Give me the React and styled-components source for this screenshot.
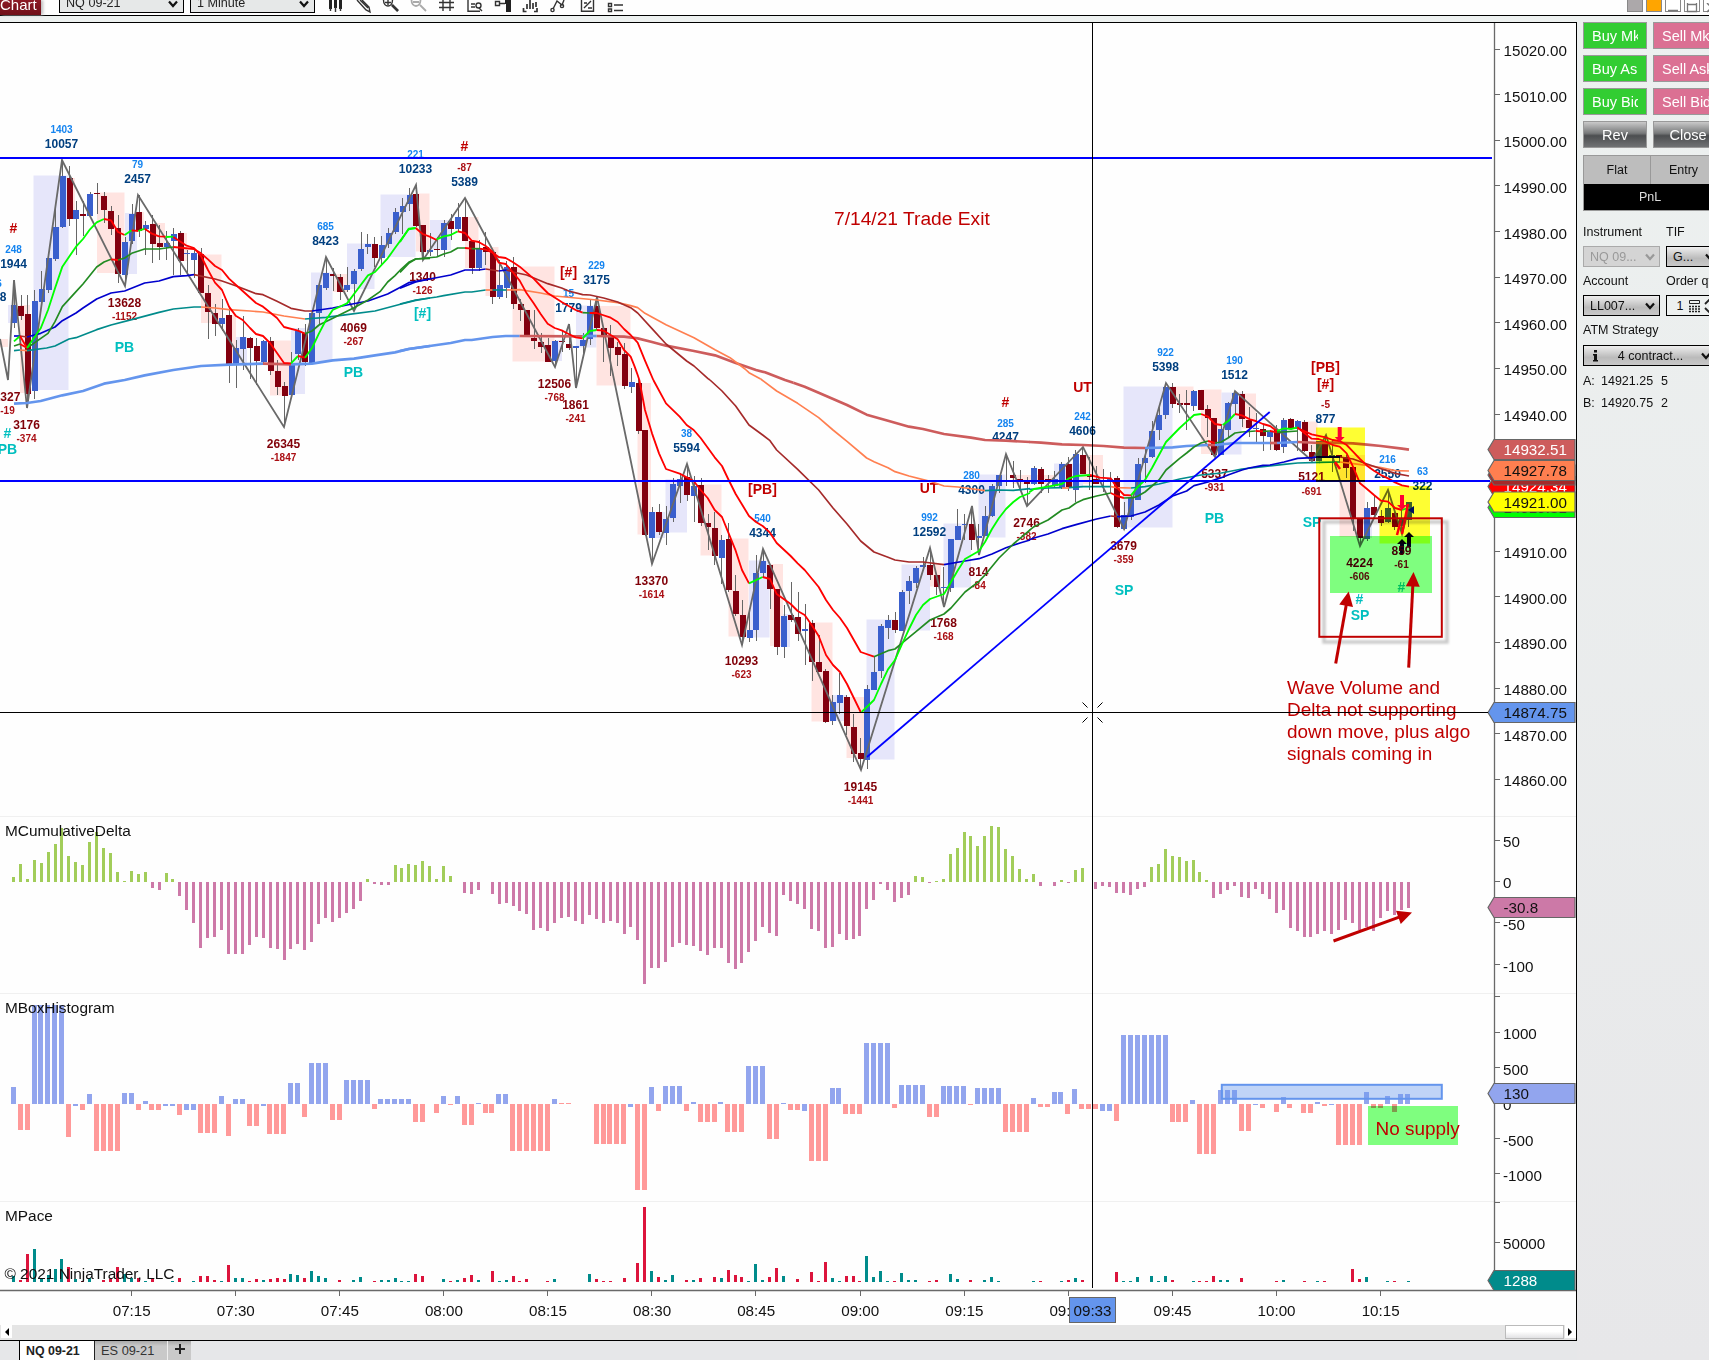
import styled, { createGlobalStyle } from "styled-components";

const GlobalStyle = createGlobalStyle`
  html, body {
    margin: 0;
    padding: 0;
    overflow: hidden;
    background: #e7e7e9;
    font-family: "Liberation Sans", Arial, sans-serif;
  }
  * {
    box-sizing: border-box;
  }
`;

//========================================================
// palette
const UP = "#3a5fcd";
const DOWN = "#83000f";
const BLUE = "#0000cd";
const BROWN = "#a52a2a";
const TEAL = "#008b8b";
const CORAL = "#ff7f50";
const RED = "#ff0000";
const LIME = "#00ff00";
const GREEN = "#228b22";
const CORN = "#6495ed";
const INDIAN = "#cd5c5c";
const NOTE = "#c00000";

// one minute bars, the first one at 06:58
const barX = (i) => 13.6 + i * 6.939;

//========================================================
// candles: direction, high, body top, body bottom, low
const CANDLES = `
u 280 305 323 328,d 295 306 316 320,d 295 314 394 408,u 290 301 391 399,u 271 289 302 306,
u 255 258 290 293,u 204 227 259 261,u 160 176 227 228,d 166 178 219 226,u 201 210 219 255,
d 201 214 216 236,u 192 194 216 218,d 183 193 194 214,d 192 196 210 223,d 206 211 229 235,
d 215 228 274 283,u 237 242 275 286,u 204 214 241 244,d 195 212 231 237,u 221 225 229 255,
d 215 224 244 263,d 225 243 247 260,u 231 243 247 260,u 228 234 241 275,d 231 233 261 275,
u 250 253 253 276,u 250 253 260 278,d 248 254 293 293,d 285 293 312 339,d 304 313 324 336,
u 299 318 324 331,d 307 315 364 383,u 340 348 364 388,u 316 337 349 370,d 337 338 348 379,
d 338 346 361 385,u 340 341 362 364,d 337 341 371 375,d 360 371 387 395,d 382 386 396 425,
u 352 365 395 397,u 328 331 354 360,d 324 333 362 366,u 311 313 363 364,u 282 285 313 324,
u 257 273 288 290,d 268 274 276 291,d 274 277 292 300,u 267 285 290 292,u 269 271 284 311,
u 232 249 269 271,u 234 244 247 254,d 237 244 258 267,u 236 245 258 264,u 228 233 244 248,
u 208 212 232 234,u 198 206 212 234,u 188 195 204 211,d 185 194 226 227,d 225 225 252 260,
u 233 250 252 256,d 237 249 250 256,u 220 223 250 257,d 214 221 229 240,u 203 217 229 231,
d 198 217 241 241,d 240 241 268 274,u 240 248 268 271,d 232 247 252 265,d 250 252 297 304,
u 260 285 297 299,u 261 267 288 298,d 257 267 304 309,d 299 304 310 321,d 310 310 335 337,
d 310 338 341 349,d 333 342 347 353,d 338 345 362 362,u 340 341 361 367,d 331 341 342 352,
d 324 344 348 350,u 346 346 348 388,u 333 340 346 353,u 300 306 339 345,d 297 306 328 330,
d 328 328 337 362,d 325 337 348 376,d 342 347 355 366,d 343 354 386 389,u 368 382 387 393,
d 377 383 431 434,d 430 430 535 536,u 507 512 538 564,d 504 512 532 535,u 506 519 533 545,
u 478 484 518 522,u 473 479 486 503,d 464 477 495 501,u 476 486 496 522,d 478 485 523 526,
d 514 523 527 550,d 512 528 556 565,u 535 540 558 584,d 523 539 590 592,d 575 591 614 616,
d 600 615 637 645,u 608 630 638 642,u 555 573 630 641,u 549 561 573 578,d 565 565 589 609,
d 589 589 647 655,u 605 616 647 658,d 582 615 620 622,d 592 617 634 641,u 604 629 631 665,
d 620 623 662 681,d 635 662 672 672,d 669 671 722 723,u 695 702 721 725,u 673 695 703 714,
d 695 697 726 735,d 714 727 754 762,d 738 753 759 770,u 685 689 760 769,u 656 672 690 690,
u 624 626 671 678,u 615 620 628 639,d 612 620 630 633,u 590 592 631 631,u 576 581 591 604,
u 566 568 583 588,u 557 565 567 570,d 549 565 575 580,d 575 575 587 595,u 567 587 588 606,
u 539 539 588 592,u 509 526 540 540,u 514 524 525 540,d 506 524 540 550,u 524 536 538 555,
u 506 516 536 536,u 484 486 516 517,u 475 475 486 493,u 454 480 482 486,d 461 475 478 488,
d 470 479 481 490,d 477 482 484 506,u 466 468 484 485,d 467 469 484 493,d 475 479 481 493,
u 471 479 486 487,u 462 464 488 489,d 457 464 487 491,u 450 454 490 502,d 447 455 474 474,
d 457 475 477 490,d 466 479 484 484,d 469 480 482 492,u 472 479 481 493,d 476 478 527 528,
u 502 515 529 530,u 494 498 517 520,u 458 464 500 500,u 449 458 463 483,u 421 431 457 458,
u 406 415 430 440,u 383 387 415 419,d 383 387 404 408,d 394 403 405 413,d 390 403 405 430,
u 390 391 406 411,d 390 390 410 410,d 405 409 418 437,d 418 418 455 456,u 424 429 455 455,
u 402 403 430 437,u 391 393 404 414,d 391 394 419 427,d 407 420 428 437,u 413 428 429 442,
d 425 429 436 451,u 430 432 437 450,d 425 430 450 451,u 418 420 447 453,d 418 419 428 428,
u 420 421 429 451,d 420 422 451 452,d 445 452 461 461,u 441 441 461 461,d 435 441 456 458,
u 440 455 457 472,d 455 455 457 463,d 455 457 468 478,d 467 467 518 531,d 518 518 538 546,
u 502 508 539 541,d 496 507 515 517,d 510 516 523 526,u 490 508 522 523,d 507 513 527 530,
u 507 518 526 534,u 502 502 520 527`
  .replace(/\n/g, "")
  .split(",")
  .map((row) => {
    const [dir, ...v] = row.trim().split(" ");
    return { dir, v: v.map(Number) };
  });

// shaded wave boxes: direction, x, y, width, height
const WAVES = [
  ["d", 0, 339, 8, 8], ["u", 8, 305, 7, 18], ["d", 20, 305, 10, 88], ["u", 33.5, 175.5, 35, 214.5],
  ["d", 69, 178, 6, 41], ["d", 97, 192.5, 27.5, 80.5], ["u", 125, 213, 12, 61], ["d", 137, 212, 7, 19],
  ["d", 152, 223, 13, 24], ["d", 180, 233, 7, 28], ["d", 201, 254.5, 20.5, 68.5], ["d", 229, 315, 7, 49],
  ["u", 236, 337, 11, 27], ["d", 270, 340.5, 21, 55], ["u", 291, 328, 14, 66], ["u", 311, 272.5, 21.5, 89],
  ["d", 333, 274, 14, 18], ["u", 347, 243.5, 27.5, 45.5], ["u", 380.5, 194.5, 35, 62.5], ["d", 416, 193.5, 13.5, 58],
  ["u", 430, 220, 21, 30], ["d", 465, 217, 13.5, 51], ["u", 479, 248, 8, 20], ["d", 485.5, 247, 13, 49],
  ["d", 512.5, 266.5, 42, 95], ["u", 555, 340, 7, 21], ["u", 576, 305.5, 20.5, 42], ["d", 596.5, 306, 34, 79.5],
  ["d", 637.5, 383, 13.5, 151.5], ["u", 651, 512, 14, 26], ["u", 665.5, 479, 21.5, 53.5], ["d", 700.5, 484.5, 21, 71],
  ["d", 728.5, 538.5, 20, 98], ["u", 749, 560.5, 20.5, 77], ["d", 770, 564, 13, 82], ["u", 783, 614, 7, 33],
  ["d", 811.5, 622.5, 21, 99], ["u", 833, 695, 14, 26], ["d", 846.5, 697, 20, 61], ["u", 866.5, 619.5, 28, 140],
  ["u", 901.5, 564.5, 28.5, 66], ["d", 930, 564.5, 11, 22], ["u", 943.5, 523.5, 27.5, 64], ["u", 978.5, 474.5, 27, 63],
  ["d", 1012, 475, 42, 9], ["u", 1054, 463.5, 29, 24], ["d", 1083, 455, 20, 29], ["u", 1123.5, 386.5, 49, 141],
  ["d", 1172.5, 386.5, 21, 17.5], ["d", 1201, 389.5, 20.5, 64.5], ["u", 1221.5, 392.5, 20, 62], ["d", 1242, 393.5, 14, 35],
  ["d", 1270, 429, 7, 21], ["d", 1301.5, 421.5, 16, 29], ["d", 1339.5, 455, 25.5, 82], ["u", 1365, 508, 7, 30],
];

const ZIGZAG =
  "0,339 8,380 14,280 27,408 62,160 125,286 138,195 284,427 326,257 354,311 416,185 423,260 465,198 555,367 569,324 576,388 597,297 652,564 687,464 742,645 763,549 861,770 930,548 944,607 972,506 979,555 1006,454 1027,506 1083,447 1124,529 1166,383 1215,457 1235,391 1312,461 1326,435 1360,546 1388,490 1402,534 1409,507";

//========================================================
// moving averages, traced in blocks; the points of a block are thirds of a pixel from its origin
const AVERAGES = [
  {
    x: 0,
    y: 120,
    thick: [
      [CORN, "42,851 81,849 122,843 187,826 249,813 312,791 374,780 434,766 520,750 603,738 687,734 789,731"],
      [INDIAN, "789,731 873,733"],
      [CORN, "873,733 936,731 998,721 1062,716 1125,706 1185,697 1226,687 1290,678"],
    ],
    thin: [
      [TEAL, "42,692 60,690"],
      [CORAL, "60,690 81,692"],
      [TEAL, "81,692 140,684 165,678 207,657 228,653 290,629 333,615 395,599 477,577 520,567 582,561 603,561"],
      [CORAL, "603,561 645,564 687,569 750,573 789,576 852,588 915,597"],
      [TEAL, "915,597 978,592 1041,584 1125,573 1204,552 1247,541 1290,534"],
      [BLUE, "42,648 60,648"],
      [BROWN, "60,648 81,651"],
      [BLUE, "81,651 122,640 165,621 187,602 228,579 249,564 290,537 333,519 374,513 434,489 477,483 520,470 560,467 582,464"],
      [BROWN, "582,464 645,477 666,483 707,497 768,521 789,524 831,544 873,565 915,573 936,573"],
      [BLUE, "936,573 998,564 1041,555 1104,543 1163,522 1204,500 1226,488 1290,477"],
      [GREEN, "42,678 60,672"],
      [RED, "60,672 81,684"],
      [GREEN, "81,684 144,640 165,605 187,560 228,515 249,492 290,441 312,426 333,418"],
      [RED, "333,418 354,420"],
      [GREEN, "354,420 374,414 395,400 434,387 477,387 520,381"],
      [RED, "520,381 582,387 603,400 624,418 645,438 666,450 687,476 728,513 768,549 789,560 831,594 852,621 894,632 915,641"],
      [GREEN, "915,641 936,633 957,615 1000,594 1062,563 1104,540 1140,515 1163,486 1185,467 1204,447 1226,427 1247,417 1290,415"],
      [LIME, "42,664 60,648"],
      [RED, "60,648 81,684"],
      [LIME, "81,684 122,625 144,570 165,505 187,440 228,380 249,357 270,328 290,307 312,297"],
      [RED, "312,297 333,301 345,321 354,336 374,345"],
      [LIME, "374,345 395,331"],
      [RED, "395,331 415,333"],
      [LIME, "415,333 434,326"],
      [RED, "434,326 456,341 477,349 497,350"],
      [LIME, "497,351 520,350"],
      [RED, "520,351 560,377 582,384 603,408 624,450 645,488 666,510 687,560 707,587 728,600 750,624 768,642 789,648 810,669 831,699 852,729 873,730"],
      [LIME, "873,730 894,708"],
      [RED, "894,708 915,713"],
      [LIME, "915,713 936,684 957,640 978,600 998,570 1041,550 1062,522 1104,466 1125,456 1163,415 1185,384 1226,328 1247,324"],
    ],
  },
  {
    x: 400,
    y: 120,
    thick: [
      [CORN, "0,693 26,687 110,675 152,669 195,660 215,660 278,651 317,648 359,648"],
      [INDIAN, "359,648 548,649"],
      [CORN, "548,648 590,648"],
      [INDIAN, "590,648 672,650 713,655 756,666 798,677 882,693 945,706 1005,728 1068,750 1095,757 1155,780 1180,788"],
    ],
    thin: [
      [TEAL, "0,552 47,540 110,531 131,527 195,516 215,516 257,510"],
      [CORAL, "257,510 278,510"],
      [TEAL, "278,510 320,510"],
      [CORAL, "320,510 359,509 422,519 464,528 527,534 590,540 653,548 692,557 713,563 735,580 798,614 882,653 945,689 990,713 1035,747 1047,758 1082,777"],
      [BLUE, "0,505 47,486 89,477 152,465 195,450 236,450 257,447"],
      [BROWN, "257,447 296,453"],
      [BLUE, "296,453 320,450"],
      [BROWN, "320,450 338,456 380,465 443,491 485,504 506,513 548,524 570,525 611,534 653,546 692,563 713,579 756,626 798,672 860,723 882,738 924,776 930,780"],
      [GREEN, "0,457 26,430 47,417 110,411 131,402 152,396 173,384 195,384"],
      [RED, "195,384 215,386"],
      [GREEN, "215,386 240,386"],
      [RED, "240,386 257,389 278,398 296,411 317,414 338,426 359,440 401,476 422,498 443,519 485,546 527,570 548,578"],
      [GREEN, "548,578 569,579"],
      [RED, "569,579 590,579 632,593 653,606 672,627 692,645 713,668 735,722 760,780"],
      [LIME, "0,366 26,326 47,324"],
      [RED, "47,324 68,342 89,350 110,360"],
      [LIME, "110,358 131,349 152,345 173,334"],
      [RED, "173,334 195,339 215,362 236,366 257,378 278,396 296,428 317,432 338,456 359,482 380,520 401,550 422,582 443,611 464,624 485,631 506,642 527,652 548,655"],
      [LIME, "548,655 569,633 590,630"],
      [RED, "590,630 611,632 632,645 653,658 672,690 692,710 704,740 713,765 718,780"],
    ],
  },
  {
    x: 600,
    y: 380,
    thick: [
      [INDIAN, "580,8 614,20 656,38 741,75 800,104 864,122 927,140 969,147 1032,162 1113,173 1155,180 1218,182 1290,186"],
    ],
    thin: [
      [CORAL, "482,-3 530,33 593,70 656,113 699,150 741,184 800,234 822,245 864,263 885,275 927,288 990,304 1032,318 1074,321 1155,332"],
      [TEAL, "1155,332 1197,330 1240,331 1290,326"],
      [BROWN, "330,0 366,33 407,78 447,135 488,165 510,182 530,210 593,268 656,330 699,384 741,432 782,483 822,516 864,532 885,540 927,546 969,546 1032,554"],
      [BLUE, "1032,554 1095,543 1137,536 1176,522 1218,503 1260,489 1290,480"],
      [RED, "160,0 198,70 239,110 260,135 281,150 302,174 344,232 366,258 386,300 407,342 447,408 468,426 488,438 510,458 530,489 572,528 593,550 614,570 656,621 678,660 699,690 720,714 741,744 782,816 822,830"],
      [GREEN, "822,830 864,812 885,807 905,790 948,755 990,720 1032,702 1053,684 1095,636 1137,604 1155,585 1197,534 1240,492 1290,450"],
      [RED, "118,0 135,90 156,160 177,220 198,267 239,281 281,303 302,330 323,354 344,390 366,411 386,460 407,512 426,570 447,610"],
      [LIME, "447,610 488,591"],
      [RED, "488,591 510,597 530,642 572,672 593,693 614,705 635,735 656,768 678,825 699,855 720,876 741,912 782,996"],
      [LIME, "785,996 822,960 843,912 864,868 885,840 905,795 927,747 948,705 969,675 990,657 1032,642 1053,606 1074,570 1095,537 1137,513 1155,486 1176,447 1197,414 1218,387 1240,366 1260,351 1290,339"],
    ],
  },
  {
    x: 1000,
    y: 340,
    thick: [
      [INDIAN, "88,306 123,308 186,313 249,315 311,318 372,323 435,324"],
      [CORN, "435,324 518,322 560,318 624,315"],
      [INDIAN, "624,315 645,315"],
      [CORN, "645,315 705,309 810,309"],
      [INDIAN, "810,309 831,309"],
      [CORN, "831,309 893,306"],
      [INDIAN, "893,306 960,309"],
    ],
    thin: [
      [TEAL, "88,448 102,447 144,444 186,443"],
      [CORAL, "186,444 207,444"],
      [TEAL, "207,443 249,440 332,440"],
      [CORAL, "332,440 351,443 393,444"],
      [TEAL, "393,444 435,440 477,432 539,417 603,405 664,399 726,387 789,380 852,373 893,369 960,367"],
      [BLUE, "88,599 102,594 144,582 186,566 228,554 290,537 332,528"],
      [BROWN, "332,528 351,530"],
      [BLUE, "351,530 393,528 435,516 477,495 518,468 560,453 582,437 624,426 664,413 684,405 726,390 747,384 789,376 810,375 852,366 893,355 936,353 960,350"],
      [GREEN, "88,571 102,560 144,540 186,510 207,504 228,489 249,479 290,468 332,459"],
      [RED, "332,459 351,468 372,474"],
      [GREEN, "372,474 400,473 414,468 435,456 456,438 477,420 498,390 539,355 560,339 582,321 603,309 624,303"],
      [RED, "624,303 645,309"],
      [GREEN, "645,309 664,306 684,294 705,279 726,276 767,273"],
      [RED, "767,273 789,274"],
      [GREEN, "789,274 810,273"],
      [RED, "810,273 831,277"],
      [GREEN, "831,277 893,273"],
      [LIME, "88,457 102,447 144,440 186,432 207,415 228,408 270,405"],
      [RED, "270,405 300,413 332,415 351,443 372,465 393,466"],
      [LIME, "393,466 414,440 435,420 456,384 477,345 498,306 539,264 560,245 582,225 603,222"],
      [RED, "603,222 624,230 645,252 664,255"],
      [LIME, "668,255 684,244 705,222"],
      [RED, "705,222 726,226 750,238 767,243 789,252 810,258 831,273"],
      [LIME, "831,273 852,265 873,267 893,262"],
    ],
  },
  {
    x: 1270,
    y: 340,
    thick: [[INDIAN, "148,309 188,308 249,310 291,314 333,318 396,326 417,329"]],
    thin: [
      [TEAL, "148,367 209,366"],
      [CORAL, "209,366 249,371 291,376 333,383 375,392 417,393"],
      [BLUE, "148,351 209,351"],
      [BROWN, "209,351 249,357 291,372 333,386 375,400 417,408"],
      [RED, "82,264 125,283 167,292 188,300 209,303 230,315 249,335 270,357 291,377 312,392 333,405 354,415 375,427 396,436 417,440"],
      [RED, "82,262 104,280 125,296 146,297 167,305 188,315 209,320 230,340 249,380 270,430 291,447 312,465 333,482 354,485 375,504 396,510"],
      [LIME, "396,510 417,503"],
    ],
  },
];

//========================================================
// chart labels: x, baseline, text, kind
const KINDS = {
  a: { size: 10, fill: "#1484f0" },
  v: { size: 12, fill: "#003f7f" },
  w: { size: 12, fill: "#800008" },
  d: { size: 10, fill: "#aa0f14" },
  r: { size: 14, fill: "#c00000" },
  c: { size: 14, fill: "#00bfbf" },
};
const LABELS = [
  [61.5, 133, "1403", "a"], [61.5, 148, "10057", "v"], [13.5, 233, "#", "r"], [13.5, 253, "248", "a"], [13.5, 268, "1944", "v"],
  [-6.5, 287, "156", "a"], [-7, 301, "2218", "v"], [7, 401, "1327", "w"], [7.5, 414, "-19", "d"], [26.5, 429, "3176", "w"],
  [26.5, 442, "-374", "d"], [7.5, 438, "#", "c"], [7.5, 454, "PB", "c"], [124.5, 307, "13628", "w"], [124.5, 320, "-1152", "d"],
  [124.5, 352, "PB", "c"], [137.5, 168, "79", "a"], [137.5, 183, "2457", "v"], [283.5, 448, "26345", "w"], [283.5, 461, "-1847", "d"],
  [325.5, 230, "685", "a"], [325.5, 245, "8423", "v"], [353.5, 332, "4069", "w"], [353.5, 345, "-267", "d"], [353.5, 377, "PB", "c"],
  [415.5, 158, "221", "a"], [415.5, 173, "10233", "v"], [422.5, 281, "1340", "w"], [422.5, 294, "-126", "d"], [422.5, 318, "[#]", "c"],
  [464.5, 151, "#", "r"], [464.5, 171, "-87", "d"], [464.5, 186, "5389", "v"], [568.5, 277, "[#]", "r"], [596.5, 269, "229", "a"],
  [596.5, 284, "3175", "v"], [568.5, 297, "15", "a"], [568.5, 312, "1779", "v"], [554.5, 388, "12506", "w"], [554.5, 401, "-768", "d"],
  [575.5, 409, "1861", "w"], [575.5, 422, "-241", "d"], [686.5, 437, "38", "a"], [686.5, 452, "5594", "v"], [651.5, 585, "13370", "w"],
  [651.5, 598, "-1614", "d"], [741.5, 665, "10293", "w"], [741.5, 678, "-623", "d"], [762.5, 494, "[PB]", "r"], [762.5, 522, "540", "a"],
  [762.5, 537, "4344", "v"], [860.5, 791, "19145", "w"], [860.5, 804, "-1441", "d"], [929, 493, "UT", "r"], [929.5, 521, "992", "a"],
  [929.5, 536, "12592", "v"], [971.5, 479, "280", "a"], [971.5, 494, "4300", "v"], [1005.5, 407, "#", "r"], [1005.5, 427, "285", "a"],
  [1005.5, 441, "4247", "v"], [943.5, 627, "1768", "w"], [943.5, 640, "-168", "d"], [978.5, 576, "814", "w"], [978.5, 589, "-84", "d"],
  [1026.5, 527, "2746", "w"], [1026.5, 540, "-382", "d"], [1082.5, 392, "UT", "r"], [1082.5, 420, "242", "a"], [1082.5, 435, "4606", "v"],
  [1123.5, 550, "3679", "w"], [1123.5, 563, "-359", "d"], [1124, 595, "SP", "c"], [1165.5, 356, "922", "a"], [1165.5, 371, "5398", "v"],
  [1234.5, 364, "190", "a"], [1234.5, 379, "1512", "v"], [1214.5, 478, "5337", "w"], [1214.5, 491, "-931", "d"], [1214.5, 523, "PB", "c"],
  [1311.5, 481, "5121", "w"], [1311.5, 495, "-691", "d"], [1312, 527, "SP", "c"], [1325.5, 372, "[PB]", "r"], [1325.5, 389, "[#]", "r"],
  [1325.5, 408, "-5", "d"], [1325.5, 423, "877", "v"], [1387.5, 463, "216", "a"], [1387.5, 478, "2550", "v"], [1422.5, 475, "63", "a"],
  [1422.5, 490, "322", "v"], [1359.5, 567, "4224", "w"], [1359.5, 580, "-606", "d"], [1359.5, 604, "#", "c"], [1360, 620, "SP", "c"],
  [1401.5, 555, "859", "w"], [1401.5, 568, "-61", "d"], [1401.5, 592, "#", "c"],
];

//========================================================
// indicator panes, in pixels from the zero line
const DELTA = [
  5, 18, 3, 22, 19, 30, 38, 54, 26, 20, 17, 40, 50, 34, 29, 10, 1, 11, 8, 10, -6, -8, 9, 3, -14, -28, -41, -66, -56, -55, -48,
  -72, -72, -72, -63, -55, -56, -66, -67, -78, -67, -62, -68, -60, -42, -36, -40, -36, -31, -27, -19, 3, -2, -3, -3, 17, 14, 18,
  17, 21, 16, 3, 16, 6, 0, -11, -12, -8, 0, -12, -22, -21, -24, -29, -32, -48, -46, -49, -41, -36, -35, -39, -42, -33, -37, -41,
  -39, -41, -52, -45, -58, -102, -86, -86, -80, -65, -61, -63, -64, -69, -73, -66, -66, -81, -87, -81, -70, -59, -45, -51, -54,
  -13, -19, -22, -27, -47, -49, -66, -65, -52, -58, -57, -54, -27, -18, -2, -8, -20, -16, -13, 6, 5, -1, 1, 3, 28, 34, 50, 46,
  36, 46, 56, 55, 33, 26, 13, 3, 8, -4, 0, -4, 2, -1, 12, 14, 0, -7, -4, -5, -11, -11, -13, -7, -5, 15, 18, 33, 26, 25, 21, 22,
  10, 2, -16, -12, -8, -4, -15, -16, -7, -12, -17, -31, -28, -46, -49, -55, -55, -52, -49, -52, -48, -38, -41, -48, -45, -49,
  -36, -29, -33, -28, -26,
];

// first bar, bar count, height, tone when it differs from the sign
const BOXES = [
  [0, 1, 17], [1, 2, -26], [3, 5, 99], [8, 1, -33], [9, 1, -2, "u"], [10, 1, -6], [11, 1, 10], [12, 4, -47], [16, 2, 11],
  [18, 1, -6], [19, 1, 3], [20, 2, -6], [22, 2, -2, "u"], [24, 1, -11], [25, 2, -6, "u"], [27, 3, -29], [30, 1, 8], [31, 1, -32],
  [32, 2, 5], [34, 2, -22], [36, 1, -2, "u"], [37, 3, -30], [40, 2, 21], [42, 1, -13], [43, 3, 41], [46, 2, -16], [48, 4, 24],
  [52, 1, -5], [53, 5, 5], [58, 2, -18], [61, 1, -9], [62, 1, 8], [63, 1, -1], [64, 1, 8], [65, 2, -21], [67, 1, 1], [68, 2, -9],
  [70, 2, 10], [72, 6, -47], [78, 1, 5], [79, 2, 1, "d"], [84, 5, -40], [89, 1, -3, "u"], [90, 2, -86], [92, 1, 17], [93, 1, -7],
  [94, 3, 18], [97, 1, -7], [98, 1, 2], [99, 3, -18], [102, 1, 2], [103, 3, -28], [106, 3, 38], [109, 2, -35], [111, 1, 1],
  [112, 2, -6], [114, 1, -7, "u"], [115, 3, -57], [118, 2, 16], [120, 3, -10], [123, 4, 61], [127, 1, -4], [128, 4, 19],
  [132, 2, -13], [134, 4, 18], [138, 1, -1], [139, 4, 16], [143, 4, -28], [147, 1, 6], [148, 2, -3], [150, 2, 12], [152, 1, -10],
  [153, 1, 15], [154, 3, -5], [157, 2, -7, "u"], [159, 1, -17], [160, 7, 69], [167, 3, -18], [170, 1, 4], [171, 3, -50],
  [174, 3, 14], [177, 2, -27], [179, 1, -1, "u"], [180, 1, -4], [182, 1, -8], [183, 1, 7], [184, 1, -4], [186, 2, -9],
  [188, 1, 2], [189, 1, -2], [190, 1, -1, "u"], [191, 4, -41], [195, 1, 12], [196, 2, -4], [198, 1, 8], [199, 1, -8], [200, 2, 10],
];

// bar, tone, height
const PACE =
  "0g6 1r2 2r28 3g33 4g4 5g7 6g13 7g23 8r15 9g3 10r1 11g4 13r2 14r3 15r15 16g8 17g4 18r4 19g1 20r3 23g1 24r4 26g1 27r6 28r6 29r2 30g1 31r17 32g4 33g4 34r1 35r3 36g2 37r3 38r4 39r3 40g8 41g7 42r4 43g11 44g6 45g4 47r2 49g2 50g5 52r1 53g2 54g2 55g4 56g1 57g1 58r8 59r6 62g3 63r1 64g2 65r4 66r7 67g2 69r11 70g1 71g2 72r6 73r1 74r3 77r1 78g3 83g8 84r3 85r1 86r1 88r4 90r19 91r75 92g11 93r5 94g2 95g7 97r2 98g2 99r4 101r5 102g4 103r12 104r7 105r5 106g1 107g18 108g2 109r5 110r14 111g6 113r3 115r10 116r1 117r20 118g4 119g1 120r6 121r6 122r1 123g26 124g5 125g11 126g1 127r1 128g9 129g2 130g2 132r1 133r2 135g8 136g3 138r2 140g2 141g5 142g1 147g1 148r1 151g1 152r2 153g4 154r2 159r10 160g1 161g1 162g5 164g6 165g1 166g6 167r2 170g1 171r1 172r1 173r6 174g2 175g2 177r4 182r1 183g2 186r1 188g1 189r1 193r13 194r3 195g5 198g1 199r1 201g1"
    .split(" ")
    .map((t) => t.match(/(\d+)([gr])(\d+)/).slice(1));

//========================================================
// scales
const PRICES = Array.from({ length: 17 }, (_, k) => ({
  y: 49.5 + k * 45.65,
  text: `${15020 - k * 10}.00`,
})).filter((p) => p.text !== "14930.00" && p.text !== "14920.00");

const SCALES = [
  [841, "50"], [882, "0"], [923.5, "-50"], [965.5, "-100"],
  [997.5, ""], [1033, "1000"], [1068.5, "500"], [1104, "0"], [1139.5, "-500"], [1174.5, "-1000"],
  [1203.5, ""], [1243, "50000"],
];

const TAGS = [
  [449.5, "14932.51", INDIAN, "#fff"],
  [486.5, "14924.34", RED, "#fff"],
  [475, "14926.38", BROWN, "#fff"],
  [470.5, "14927.78", CORAL, "#111"],
  [507.5, "14919.81", LIME, "#111"],
  [502, "14921.00", "#ffff00", "#111"],
  [712.5, "14874.75", CORN, "#111"],
  [907.5, "-30.8", "#cc79a7", "#111"],
  [1093.5, "130", "#92a5ee", "#111"],
  [1280.5, "1288", TEAL, "#fff"],
];

const TIMES = ["07:15", "07:30", "07:45", "08:00", "08:15", "08:30", "08:45", "09:00", "09:15", "09:30", "09:45", "10:00", "10:15"];

//========================================================
const ChartSvg = styled.svg`
  display: block;
  background: #fefefe;
  font-family: "Liberation Sans", Arial, sans-serif;
`;
const ScaleText = styled.text`
  font-size: 15.2px;
  fill: ${(props) => props.$color || "#111"};
`;
const PaneTitle = styled(ScaleText)`
  font-size: 15.4px;
`;
const NoteText = styled.text`
  font-size: ${(props) => props.$size || 18.95}px;
  fill: ${NOTE};
`;
const Label = styled.text`
  font-weight: bold;
  text-anchor: middle;
`;
// highlighter laid over the bars
const Marker = styled.rect`
  mix-blend-mode: multiply;
`;

function Candles() {
  return (
    <g shapeRendering="crispEdges">
      {CANDLES.map(({ dir, v }, i) => (
        <g key={i} fill={dir === "u" ? UP : DOWN}>
          <rect x={barX(i)} y={v[0]} width="1" height={v[3] - v[0]} fill="#666" />
          <rect x={Math.round(barX(i) - 2.6)} y={v[1]} width="6" height={Math.max(v[2] - v[1], 1)} />
        </g>
      ))}
    </g>
  );
}

function Averages() {
  return AVERAGES.map((block) => (
    <g
      key={block.x}
      fill="none"
      strokeLinejoin="round"
      transform={`translate(${block.x} ${block.y}) scale(${1 / 3})`}
    >
      {block.thick.map(([color, points], i) => (
        <polyline key={`k${i}`} stroke={color} strokeWidth="8" points={points} />
      ))}
      {block.thin.map(([color, points], i) => (
        <polyline
          key={i}
          stroke={color}
          strokeWidth={color === LIME || color === RED ? 5.5 : 5}
          points={points}
        />
      ))}
    </g>
  ));
}

function Arrow({ x1, y1, x2, y2, width = 3 }) {
  const angle = (Math.atan2(y2 - y1, x2 - x1) * 180) / Math.PI;
  const length = Math.hypot(x2 - x1, y2 - y1);
  return (
    <g transform={`translate(${x1} ${y1}) rotate(${angle})`} fill={NOTE}>
      <rect x="0" y={-width / 2} width={length - 10} height={width} />
      <path d={`M${length} 0l-14.5 -7v14z`} />
    </g>
  );
}

function SignalArrow({ x, y, up }) {
  return (
    <path
      transform={`translate(${x} ${y}) scale(1 ${up ? -1 : 1})`}
      fill={up ? "#050038" : "#ff0033"}
      d="M-2 -15h4v10h3l-5 5l-5 -5h3z"
    />
  );
}

function Tag({ y, text, fill, color }) {
  return (
    <g>
      <path
        d={`M1488 ${y}l6 -10h81v20h-81z`}
        fill={fill}
        stroke="#666"
        strokeWidth="1.2"
      />
      <ScaleText x="1503.5" y={y + 5.9} $color={color}>
        {text}
      </ScaleText>
    </g>
  );
}

function PricePane() {
  return (
    <g>
      {WAVES.map(([dir, x, y, w, h], i) => (
        <rect key={i} x={x} y={y} width={w} height={h} fill={dir === "u" ? "#e6e6fa" : "#ffe4e1"} />
      ))}
      <Candles />
      <SignalArrow x={1409} y={532} up />
      <SignalArrow x={1402} y={539} up />
      {LABELS.map(([x, y, text, kind], i) => (
        <Label key={i} x={x} y={y} fontSize={KINDS[kind].size} fill={KINDS[kind].fill}>
          {text}
        </Label>
      ))}
      <polyline points={ZIGZAG} fill="none" stroke="#696969" strokeWidth="1.8" />
      <Averages />
      <path d="M0 158H1492M0 481H1490" stroke="#0000ff" strokeWidth="2" />
      <path d="M867 757L1269.7 412" stroke="#0000ff" strokeWidth="1.8" />
      <path d="M1402 534L1408 504M1397 535l4 -15M1335 462l5 7" stroke="#ff0033" strokeWidth="2.5" />
      <Marker x="1316" y="427.5" width="49" height="53" fill="#ffff33" />
      <Marker x="1379.5" y="486" width="50.5" height="57.5" fill="#ffff33" />
      <Marker x="1330" y="536" width="102" height="57" fill="#80ff80" />
      <path d="M1316 480.8h49M1318 457h22" stroke="#000020" strokeWidth="1.8" />
      <SignalArrow x={1339.7} y={442} />
      <SignalArrow x={1402} y={510} />
      <path d="M1408 510l6 -4v8z" fill="#001060" />
      <rect x="1324" y="522" width="123" height="120" fill="none" stroke="#000" strokeOpacity=".2" strokeWidth="3.5" filter="url(#soft)" />
      <rect x="1319.3" y="518.3" width="122.5" height="118.5" fill="none" stroke={NOTE} strokeWidth="2" />
      <Arrow x1={1335.7} y1={663.5} x2={1348.7} y2={591.5} />
      <Arrow x1={1408.7} y1={667.7} x2={1413.5} y2={572} />
      <NoteText x="834" y="224.5" $size={19.2}>7/14/21 Trade Exit</NoteText>
      {["Wave Volume and", "Delta not supporting", "down move, plus algo", "signals coming in"].map((line, i) => (
        <NoteText key={line} x="1287" y={694 + i * 22}>
          {line}
        </NoteText>
      ))}
    </g>
  );
}

function DeltaPane() {
  return (
    <g>
      <g shapeRendering="crispEdges">
        {DELTA.map((h, i) => (
          <rect
            key={i}
            x={Math.round(barX(i) - 1.7)}
            y={h > 0 ? 882 - h : 882}
            width="3"
            height={Math.abs(h)}
            fill={h > 0 ? "#a2cd5a" : "#cd79a8"}
          />
        ))}
      </g>
      <Arrow x1={1333.5} y1={941} x2={1412} y2={912.5} />
      <PaneTitle x="5" y="836">MCumulativeDelta</PaneTitle>
    </g>
  );
}

function BoxPane() {
  return (
    <g>
      <g shapeRendering="crispEdges">
        {BOXES.flatMap(([start, count, h, tone]) =>
          Array.from({ length: count }, (_, k) => (
            <rect
              key={start + k}
              x={Math.round(barX(start + k) - 2.9)}
              y={h > 0 ? 1104 - h : 1104}
              width="5"
              height={Math.abs(h)}
              fill={(tone || (h > 0 ? "u" : "d")) === "u" ? "#92a5ee" : "#ff9999"}
            />
          ))
        )}
      </g>
      <rect x="1221.8" y="1084.8" width="220" height="14" fill="#6495ed" fillOpacity=".4" stroke="#6495ed" strokeWidth="2" />
      <Marker x="1368" y="1106" width="90" height="39" fill="#80ff80" />
      <NoteText x="1375.5" y="1135">No supply</NoteText>
      <PaneTitle x="5" y="1013">MBoxHistogram</PaneTitle>
    </g>
  );
}

function PacePane() {
  return (
    <g>
      <g shapeRendering="crispEdges">
        {PACE.map(([i, tone, h]) => (
          <rect
            key={i}
            x={Math.round(barX(+i) - 1.7)}
            y={1282 - h}
            width="3"
            height={h}
            fill={tone === "g" ? TEAL : "#dc143c"}
          />
        ))}
      </g>
      <PaneTitle x="5" y="1221">MPace</PaneTitle>
      <PaneTitle x="4.5" y="1279">© 2021 NinjaTrader, LLC</PaneTitle>
    </g>
  );
}

function Axes() {
  return (
    <g>
      <path d="M1494.5 23V1290M0 1290.5H1577" stroke="#696969" strokeWidth="1.3" />
      {PRICES.map((p) => (
        <g key={p.text}>
          <path d={`M1495 ${Math.round(p.y) - 0.5}h5`} stroke="#696969" />
          <ScaleText x="1503.5" y={p.y + 6.4}>{p.text}</ScaleText>
        </g>
      ))}
      {SCALES.map(([y, text]) => (
        <g key={y}>
          <path d={`M1495 ${Math.floor(y) - 0.5}h5`} stroke="#696969" />
          <ScaleText x="1503" y={y + 6}>{text}</ScaleText>
        </g>
      ))}
      {TIMES.map((text, i) => (
        <g key={text}>
          <path d={`M${Math.floor(131.5 + i * 104.08)}.5 1291v5`} stroke="#696969" />
          <ScaleText x={131.7 + i * 104.08} y="1316" textAnchor="middle">
            {text}
          </ScaleText>
        </g>
      ))}
      {TAGS.map(([y, text, fill, color]) => (
        <Tag key={text} y={y} text={text} fill={fill} color={color} />
      ))}
    </g>
  );
}

function Crosshair() {
  return (
    <g>
      <path d="M1092.5 23V1288M0 712.5H1488" stroke="#000" shapeRendering="crispEdges" />
      <path
        d="M1082.5 702.5l5 5M1102.5 702.5l-5 5M1082.5 722.5l5 -5M1102.5 722.5l-5 -5"
        stroke="#000"
      />
      <rect x="1069.5" y="1297.5" width="46" height="25" fill={CORN} stroke="#666" />
      <ScaleText x="1092.5" y="1316" textAnchor="middle">09:33</ScaleText>
    </g>
  );
}

function Chart() {
  return (
    <ChartSvg width="1576" height="1302" viewBox="0 23 1576 1302">
      <defs>
        <filter id="soft" x="-10%" y="-10%" width="120%" height="120%">
          <feGaussianBlur stdDeviation="1.2" />
        </filter>
      </defs>
      <path d="M0 816.5H1577M0 993.5H1577M0 1201.5H1577" stroke="#f0f0f0" />
      <PricePane />
      <DeltaPane />
      <BoxPane />
      <PacePane />
      <Axes />
      <Crosshair />
    </ChartSvg>
  );
}

//========================================================
const Window = styled.div`
  display: flex;
  flex-direction: column;
  width: 1709px;
  height: 1360px;
  overflow: hidden;
  background: linear-gradient(#edf1f0, #e7e7e9);
`;
const Toolbar = styled.header`
  display: flex;
  align-items: flex-start;
  height: 16px;
  background: #fefefe;
  border-bottom: 1px solid #000;
`;
const ChartButton = styled.div`
  flex: none;
  width: 41px;
  height: 15px;
  margin-right: 18px;
  background: linear-gradient(#8c1a25, #701019);
  box-shadow: 2px 0 3px #bbb;
  color: #fff;
  font-size: 15px;
  line-height: 9px;
`;
const ToolSelect = styled.div`
  display: flex;
  flex: none;
  justify-content: space-between;
  width: 125px;
  height: 13px;
  margin-right: 6px;
  padding: 0 5px 0 6px;
  border: 1px solid #000;
  border-top: 0;
  background: #e6e8e8;
  color: #222;
  font-size: 12.6px;
  line-height: 7px;
`;
const ToolIcons = styled.svg`
  flex: none;
  width: 1306px;
  height: 15px;
`;
const WindowButton = styled.div`
  flex: none;
  width: 16px;
  height: 12px;
  margin-right: 3px;
  border: 1px solid #888;
  border-top: 0;
  background: ${(props) => props.$fill || "#fff"};
`;

const Body = styled.div`
  display: flex;
  height: 1344px;
`;
const ChartColumn = styled.main`
  display: flex;
  flex: none;
  flex-direction: column;
  width: 1577px;
  padding-top: 6px;
`;
const ChartFrame = styled.div`
  height: 1319px;
  border: solid #000;
  border-width: 1px 1px 1px 0;
  background: #fefefe;
`;
const ScrollTrack = styled.div`
  display: flex;
  justify-content: space-between;
  height: 15px;
  padding: 0 0 1px 1px;
  background: #e5e5e5;
`;
const ScrollEnd = styled.div`
  display: flex;
  align-items: center;
  justify-content: center;
  width: 11px;
  height: 13px;
  background: #fff;
`;
const ScrollRight = styled.div`
  display: flex;
  gap: 1px;
`;
const Thumb = styled.div`
  width: 59px;
  height: 14px;
  border: 1px solid #bbb;
  background: linear-gradient(#fff 45%, #e2e2e4);
`;
const Tabs = styled.nav`
  display: flex;
  height: 20px;
  padding-left: 19px;
  background: #e6e7e9;
`;
const Tab = styled.div`
  width: ${(props) => props.$width}px;
  height: 20px;
  padding-left: 6px;
  border-left: 1px solid ${(props) => props.$edge};
  background: ${(props) => (props.$active ? "#fff" : "linear-gradient(#aaa, #c9c9c9 5px)")};
  color: ${(props) => (props.$active ? "#222" : "#333")};
  font-size: ${(props) => (props.$active ? 12.4 : 12.8)}px;
  font-weight: ${(props) => (props.$active ? "bold" : "normal")};
  line-height: 20px;
`;

const Panel = styled.aside`
  width: 134px;
  flex: none;
  padding: 6px 0 0 6px;
  color: #111;
  font-size: 12.5px;
  white-space: nowrap;
`;
const OrderGrid = styled.div`
  display: grid;
  grid-template-columns: 64px 70px;
  grid-auto-rows: 27px;
  gap: 6px;
`;
const TONES = {
  buy: "#32cd32",
  sell: "#db7093",
  dark: "linear-gradient(#c9c9c9, #77797a 45%, #4c4e50 55%, #707274)",
};
const OrderButton = styled.div`
  padding: 0 8px;
  border: 1px solid #999;
  background: ${(props) => TONES[props.$tone]};
  color: #fff;
  font-size: 14.5px;
  line-height: 26px;
  text-align: ${(props) => (props.$tone === "dark" ? "center" : "left")};
`;
const ButtonText = styled.div`
  overflow: hidden;
`;
const Position = styled.div`
  display: grid;
  grid-template-columns: 66px 66px;
  grid-template-rows: 28px 26px;
  width: 134px;
  margin-top: 7px;
  border: 1px solid #999;
`;
const Cell = styled.div`
  background: #bdbdbd;
  line-height: 28px;
  text-align: center;
  & + & {
    border-left: 1px solid #999;
  }
`;
const PnlCell = styled.div`
  grid-column: 1 / 3;
  background: #000;
  color: #ddd;
  line-height: 27px;
  text-align: center;
`;
const Fields = styled.div`
  display: grid;
  grid-template-columns: 77px 70px;
  column-gap: 6px;
  margin-top: ${(props) => props.$top}px;
`;
const FieldLabel = styled.div`
  height: ${(props) => props.$height || 21}px;
  line-height: 14px;
`;
const Field = styled.div`
  display: flex;
  align-items: center;
  justify-content: space-between;
  height: 21px;
  padding: 0 4px 0 6px;
  border: 1px solid ${(props) => (props.$disabled ? "#aaa" : "#000")};
  background: ${(props) =>
    props.$disabled ? "#d4d4d4" : props.$plain ? "#edf0ef" : "linear-gradient(#eee, #bbb 60%, #c8c8c8)"};
  color: ${(props) => (props.$disabled ? "#999" : "#111")};
`;
const WideField = styled(Field)`
  width: 140px;
  margin-top: 9px;
  padding-right: 11px;
`;
const Quotes = styled.div`
  margin-top: 8px;
`;
const Quote = styled.div`
  display: flex;
  height: 22px;
  line-height: 14px;
`;
const QuoteSide = styled.span`
  width: 18px;
`;
const QuotePrice = styled.span`
  width: 60px;
`;

function Chevron({ color = "#111" }) {
  return (
    <svg width="10" height="8" viewBox="0 0 10 8" fill="none" stroke={color} strokeWidth="2.2">
      <path d="M1 1.5l4 4.5l4 -4.5" />
    </svg>
  );
}

function Triangle({ left }) {
  return (
    <svg width="5" height="8" viewBox="0 0 5 8">
      <path d={left ? "M5 0v8l-4 -4z" : "M0 0v8l4 -4z"} fill="#000" />
    </svg>
  );
}

// the icons start at x = 321, the window buttons at 1627
function ToolbarIcons() {
  return (
    <ToolIcons viewBox="321 0 1306 15" preserveAspectRatio="xMinYMin" fill="none" stroke="#333" strokeWidth="1.4">
      <path d="M329 0v9h3v-9zM334 0v8h3v-8zM339 0v9h3v-9z" fill="#222" stroke="none" />
      <path d="M330.5 8v3M335.5 7v5M340.5 8v3" />
      <path d="M357 0l9 10l4 2l-1 -5l-7 -7M360 0l8 8" />
      <path d="M383.5 0c0 8 9 8 9 0M388 0v5M385 2.5h6M392 5l6 6" />
      <path d="M398 11l-6 -6" strokeWidth="2.6" />
      <path d="M411.5 0c0 8 9 8 9 0M413 2h6M420 5l6 6" stroke="#aaa" strokeWidth="1.8" />
      <path d="M439 2.5h15M439 7.5h15M443 0v11M450 0v11" />
      <path d="M478 11.3h-10v-11.3M480 11.3h-4M471 4h4M471 7h4M482 11l-3 -3" />
      <circle cx="478.5" cy="5.5" r="2.5" />
      <path d="M495.5 1.5h4v4h-4zM500 3.5h5" />
      <path d="M505 0h6v12h-5v-8h-1z" fill="#222" stroke="none" />
      <path d="M523.5 8v3.5h3M537 8v3.5h-3M527 9v-5M530 9v-9M533 9v-6M536 7v-5" strokeWidth="1.7" />
      <path d="M553 9l4 -8l5 4l2 -5" />
      <circle cx="552.5" cy="10" r="1.6" />
      <circle cx="562" cy="6" r="1.6" />
      <path d="M581.5 0v11.3h12v-11.3M584 8l7 -7M584 3h3M588 8h4" />
      <path d="M608.5 3.5h3v3h-3zM608.5 9h3v2.5h-3zM614 5h9M614 10.5h9" />
    </ToolIcons>
  );
}

function TradePanel() {
  const orders = [
    ["Buy Mkt", "buy"], ["Sell Mkt", "sell"],
    ["Buy Ask", "buy"], ["Sell Ask", "sell"],
    ["Buy Bid", "buy"], ["Sell Bid", "sell"],
    ["Rev", "dark"], ["Close", "dark"],
  ];
  return (
    <Panel>
      <OrderGrid>
        {orders.map(([text, tone]) => (
          <OrderButton key={text} $tone={tone}>
            <ButtonText>{text}</ButtonText>
          </OrderButton>
        ))}
      </OrderGrid>
      <Position>
        <Cell>Flat</Cell>
        <Cell>Entry</Cell>
        <PnlCell>PnL</PnlCell>
      </Position>
      <Fields $top={14}>
        <FieldLabel>Instrument</FieldLabel>
        <FieldLabel>TIF</FieldLabel>
        <Field $disabled>
          NQ 09...
          <Chevron color="#999" />
        </Field>
        <Field>
          G...
          <svg width="28" height="8" viewBox="0 0 28 8" fill="none" stroke="#111" strokeWidth="2.2">
            <path d="M3 1.5l4 4.5l4 -4.5" />
          </svg>
        </Field>
      </Fields>
      <Fields $top={7}>
        <FieldLabel>Account</FieldLabel>
        <FieldLabel>Order qty</FieldLabel>
        <Field>
          LL007...
          <Chevron />
        </Field>
        <Field $plain>
          &nbsp;1
          <svg width="44" height="16" viewBox="0 0 44 16" fill="none" stroke="#222">
            <path d="M2.5 2.5h10v3h-10z" />
            <path d="M2 8.5h11M2 11h11M2 13.5h11" strokeWidth="1.6" strokeDasharray="2 1" />
            <path d="M18 6l4 -4l4 4M18 10l4 4l4 -4" strokeWidth="1.8" />
          </svg>
        </Field>
      </Fields>
      <Fields $top={7}>
        <FieldLabel $height={13}>ATM Strategy</FieldLabel>
      </Fields>
      <WideField>
        <svg width="10" height="12" viewBox="0 0 10 12" fill="#111">
          <path d="M4 0h3v2.5h-3zM3 4h4v6h1v1.5h-5v-1.5h1v-4.5h-1z" />
        </svg>
        4 contract...
        <Chevron />
      </WideField>
      <Quotes>
        <Quote>
          <QuoteSide>A:</QuoteSide>
          <QuotePrice>14921.25</QuotePrice>5
        </Quote>
        <Quote>
          <QuoteSide>B:</QuoteSide>
          <QuotePrice>14920.75</QuotePrice>2
        </Quote>
      </Quotes>
    </Panel>
  );
}

export default function App() {
  return (
    <>
      <GlobalStyle />
      <Window>
        <Toolbar>
          <ChartButton>Chart</ChartButton>
          <ToolSelect>
            NQ 09-21
            <Chevron />
          </ToolSelect>
          <ToolSelect>
            1 Minute
            <Chevron />
          </ToolSelect>
          <ToolbarIcons />
          <WindowButton $fill="#aca8aa" />
          <WindowButton $fill="#ffa500" />
          <WindowButton>
            <svg width="14" height="11" stroke="#777" strokeWidth="1.5" fill="none">
              <path d="M2 7.5h10" />
            </svg>
          </WindowButton>
          <WindowButton>
            <svg width="14" height="11" stroke="#777" strokeWidth="1.3" fill="none">
              <path d="M2.5 0v8.5h9v-8.5M3 1.5h8" />
            </svg>
          </WindowButton>
          <WindowButton>
            <svg width="14" height="11" stroke="#777" strokeWidth="1.5" fill="none">
              <path d="M3 9l4 -4l4 4M3 0l4 4" />
            </svg>
          </WindowButton>
        </Toolbar>
        <Body>
          <ChartColumn>
            <ChartFrame>
              <Chart />
              <ScrollTrack>
                <ScrollEnd>
                  <Triangle left />
                </ScrollEnd>
                <ScrollRight>
                  <Thumb />
                  <ScrollEnd>
                    <Triangle />
                  </ScrollEnd>
                </ScrollRight>
              </ScrollTrack>
            </ChartFrame>
            <Tabs>
              <Tab $active $width={75} $edge="#000">NQ 09-21</Tab>
              <Tab $width={73} $edge="#222">ES 09-21</Tab>
              <Tab $width={24} $edge="#eee">
                <svg width="12" height="12" stroke="#222" strokeWidth="2">
                  <path d="M1 6h10M6 1v10" />
                </svg>
              </Tab>
            </Tabs>
          </ChartColumn>
          <TradePanel />
        </Body>
      </Window>
    </>
  );
}
